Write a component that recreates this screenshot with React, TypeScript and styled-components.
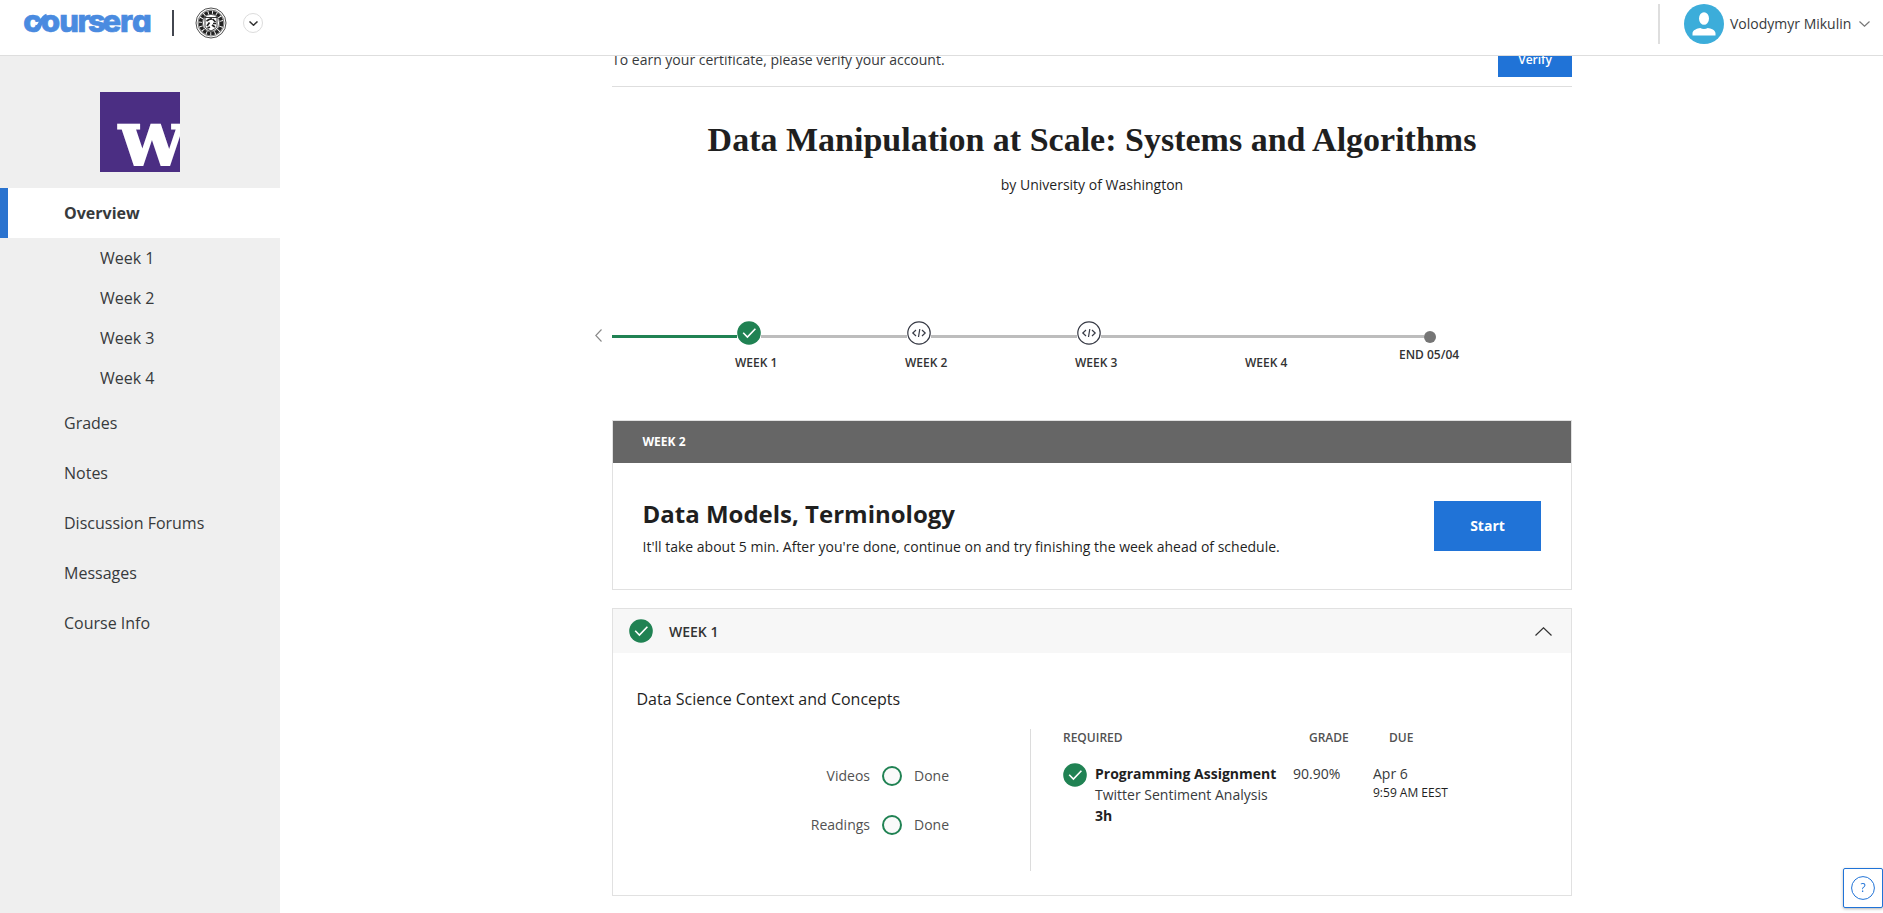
import React from "react";
import styled, { createGlobalStyle } from "styled-components";

const GlobalStyle = createGlobalStyle`
  * { box-sizing: border-box; }
  html, body { margin: 0; padding: 0; }
  body {
    background: #fff;
    color: #1f1f1f;
    font-family: "Open Sans", "Noto Sans", sans-serif;
    font-size: 14px;
    line-height: 21px;
    overflow: hidden;
  }
  svg { display: block; flex: none; }
  h1, h2, h3, p { margin: 0; }
`;

const green = "#208253";
const blue = "#2073d7";

const Page = styled.div`
  display: flex;
  flex-direction: column;
  height: 913px;
  overflow: hidden;
`;
const Header = styled.header`
  display: flex;
  justify-content: space-between;
  flex: none;
  height: 56px;
  border-bottom: 1px solid #dedede;
  background: #fff;
`;
const Brand = styled.div`
  display: flex;
  align-items: center;
  height: 46px;
  padding-left: 22px;
`;
const Wordmark = styled.svg`
  overflow: visible;
`;
const BrandDivider = styled.span`
  width: 2px;
  height: 26px;
  margin: 0 21px 0 20px;
  background: #42464f;
`;
const RoundButton = styled.span`
  display: flex;
  align-items: center;
  justify-content: center;
  width: 20px;
  height: 20px;
  margin-left: 16px;
  border: 1px solid #dcdcdc;
  border-radius: 50%;
`;
const Account = styled.div`
  display: flex;
  align-items: center;
  height: 40px;
  margin: 4px 13px 0 0;
  padding-left: 24px;
  border-left: 2px solid #dedede;
  color: #373a3c;
`;
const AccountName = styled.span`
  width: 122px;
  margin: 0 7px 0 6px;
  padding-bottom: 1px;
  line-height: 20px;
  white-space: nowrap;
`;
const Body = styled.div`
  display: flex;
  flex: 1;
  min-height: 0;
`;
const Sidebar = styled.nav`
  flex: none;
  width: 280px;
  padding-top: 36px;
  background: #efefef;
`;
const SchoolLogo = styled.div`
  width: 80px;
  height: 80px;
  margin: 0 0 16px 100px;
`;
const NavItem = styled.div<{ $active?: boolean; $nested?: boolean }>`
  display: flex;
  align-items: center;
  height: ${(p) => (p.$nested ? 40 : 50)}px;
  padding-left: ${(p) => (p.$nested ? 92 : 56)}px;
  border-left: 8px solid ${(p) => (p.$active ? "#2a73cf" : "transparent")};
  background: ${(p) => (p.$active ? "#fff" : "transparent")};
  color: #373a3c;
  font-size: 16px;
  font-weight: ${(p) => (p.$active ? 700 : 400)};
`;
const Main = styled.main`
  flex: 1;
  overflow: hidden;
  padding-left: 332px;
`;
const Content = styled.div`
  width: 960px;
`;
const VerifyBar = styled.div`
  display: flex;
  justify-content: space-between;
  height: 46px;
  margin-top: -15px;
  border-bottom: 1px solid #dedede;
  color: #373a3c;
`;
const VerifyText = styled.p`
  padding-top: 8px;
`;
const Button = styled.button<{ $large?: boolean }>`
  display: flex;
  align-items: center;
  justify-content: center;
  width: ${(p) => (p.$large ? 107 : 74)}px;
  height: ${(p) => (p.$large ? 50 : 36)}px;
  padding: 0 0 ${(p) => (p.$large ? 2 : 0)}px;
  border: 0;
  background: ${blue};
  color: #fff;
  font: ${(p) => (p.$large ? "700 14px" : "600 12px")} "Open Sans", sans-serif;
`;
const Title = styled.h1`
  margin-top: 33px;
  text-align: center;
  font: 700 34px/40px "Liberation Serif", serif;
`;
const Byline = styled.p`
  margin-top: 14px;
  text-align: center;
`;
const Timeline = styled.section`
  display: flex;
  height: 99px;
  margin: 126px 0 0 -17px;
`;
const PrevArrow = styled.div`
  width: 17px;
  padding-top: 8px;
`;
const Step = styled.div<{ $track?: number }>`
  display: grid;
  grid-template-columns: ${(p) => p.$track ?? 146}px 24px;
  grid-template-rows: 24px auto;
  width: ${(p) => (p.$track ?? 146) + 24}px;
`;
const Track = styled.span<{ $done?: boolean }>`
  height: 3px;
  margin-top: 14px;
  background: ${(p) => (p.$done ? green : "#bdbdbd")};
`;
const StepLabel = styled.span<{ $end?: boolean }>`
  grid-column: 2;
  margin: ${(p) => (p.$end ? "-1px 0 0 -25px" : "7px 0 0 -2px")};
  color: #333;
  font-size: 12px;
  font-weight: 600;
  white-space: nowrap;
`;
const Card = styled.section<{ $height: number }>`
  height: ${(p) => p.$height}px;
  margin-bottom: 18px;
  border: 1px solid #e1e1e1;
  background: #fff;
`;
const DarkHead = styled.div`
  height: 42px;
  padding: 10px 0 0 29.5px;
  background: #666;
  color: #fff;
  font-size: 12px;
  font-weight: 700;
`;
const NextUp = styled.div`
  display: flex;
  justify-content: space-between;
  padding: 38px 30px 0 29.5px;
`;
const LessonTitle = styled.h2`
  font-size: 24px;
  line-height: 30px;
  font-weight: 700;
  margin: -2px 0 7px;
`;
const LightHead = styled.div`
  display: flex;
  align-items: center;
  height: 44px;
  padding: 0 19px 0 16px;
  background: #f7f7f7;
`;
const WeekName = styled.h3`
  flex: 1;
  margin-left: 16px;
  color: #333;
  font-size: 14px;
  font-weight: 600;
`;
const ModuleName = styled.p`
  padding: 35px 0 0 23.5px;
  font-size: 16px;
  line-height: 22px;
`;
const Columns = styled.div`
  display: flex;
  height: 142px;
  margin-top: 19px;
`;
const Progress = styled.div`
  width: 418px;
  padding-top: 35px;
  border-right: 1px solid #dcdcdc;
`;
const ProgressRow = styled.div`
  display: grid;
  grid-template-columns: 257px 20px auto;
  column-gap: 12px;
  align-items: center;
  height: 24px;
  margin-bottom: 25px;
  color: #525252;
`;
const ProgressLabel = styled.span<{ $right?: boolean }>`
  padding-bottom: 2px;
  text-align: ${(p) => (p.$right ? "right" : "left")};
`;
const Ring = styled.i`
  width: 20px;
  height: 20px;
  border: 2px solid ${green};
  border-radius: 50%;
  background: #fafafa;
`;
const Required = styled.div`
  display: grid;
  grid-template-columns: 32px 198px 80px auto;
  grid-template-rows: 34px auto;
  padding-left: 32px;
`;
const ColHead = styled.span<{ $wide?: boolean }>`
  grid-column: ${(p) => (p.$wide ? "span 2" : "auto")};
  padding: ${(p) => (p.$wide ? "0" : "0 0 0 16px")};
  line-height: 17px;
  color: #525252;
  font-size: 12px;
  font-weight: 600;
`;
const Cell = styled.div`
  color: #1f1f1f;
`;
const Muted = styled.div`
  color: #373a3c;
`;
const Strong = styled.div`
  font-weight: 700;
`;
const Time = styled.div`
  font-size: 12px;
  line-height: 18px;
`;
const HelpButton = styled.button`
  position: fixed;
  right: 0;
  bottom: 5px;
  display: flex;
  align-items: center;
  justify-content: center;
  width: 40px;
  height: 40px;
  padding: 0;
  border: 1px solid ${blue};
  border-radius: 2px;
  background: #fff;
  box-shadow: 0 1px 3px rgba(0, 0, 0, 0.3);
`;

const CourseraLogo = () => (
  <Wordmark width="130" height="46" viewBox="22 0 130 46">
    <text
      y="31.5"
      x="23.2 41 59.2 77.6 88 102.4 120 132"
      fill="#4a8be0"
      stroke="#4a8be0"
      strokeWidth="0.7"
      style={{ fontFamily: "Inter", fontWeight: 800, fontSize: 31, fontFeatureSettings: '"cv11"' }}
    >
      coursera
    </text>
    <path d="M35 30 C40 28 41 18 47 16" fill="none" stroke="#4a8be0" strokeWidth="4.5" />
  </Wordmark>
);

const Seal = () => (
  <svg width="32" height="32" viewBox="0 0 32 32" fill="none" stroke="#222">
    <circle cx="16" cy="16" r="15" strokeWidth="0.8" />
    <circle cx="16" cy="16" r="13" strokeWidth="0.6" />
    <circle cx="16" cy="16" r="10.6" strokeWidth="3.4" strokeDasharray="3.4 .9" />
    <circle cx="16" cy="16" r="8.6" strokeWidth="0.7" />
    <path d="M10 10.500h12v8c0 3-3.500 4-6 5.500-2.500-1.500-6-2.500-6-5.500z" fill="#fff" strokeWidth="0.9" />
    <path d="M11.500 14l3.500-2M17.500 12l3 3M12 19l2.500-3.500M17 18l3 2M18 16.500h3M12.500 21l2.500-1M16 11v2" strokeWidth="1.700" />
  </svg>
);

const Chevron = ({ w, h, color, width = 1.2, dir = "down" }: { w: number; h: number; color: string; width?: number; dir?: string }) => {
  const d =
    dir === "down" ? `M.5 .5L${w / 2} ${h - 0.8}L${w - 0.5} .5`
    : dir === "up" ? `M.5 ${h - 0.5}L${w / 2} .8L${w - 0.5} ${h - 0.5}`
    : `M${w - 0.5} .5L.8 ${h / 2}L${w - 0.5} ${h - 0.5}`;
  return (
    <svg width={w} height={h} viewBox={`0 0 ${w} ${h}`}>
      <path d={d} fill="none" stroke={color} strokeWidth={width} />
    </svg>
  );
};

const Avatar = () => (
  <svg width="40" height="40" viewBox="0 0 40 40">
    <circle cx="20" cy="20" r="20" fill="#3cadda" />
    <ellipse cx="20" cy="14.500" rx="5" ry="6.300" fill="#fff" />
    <path d="M8.500 31.500v-2.200c0-3 4.500-4.800 7.800-5.200 2 1.200 5.400 1.200 7.400 0 3.300.4 7.800 2.200 7.800 5.200v2.200z" fill="#fff" />
  </svg>
);

const UniversityMark = () => (
  <svg width="80" height="80" viewBox="0 0 80 80">
    <rect width="80" height="80" fill="#4b2e83" />
    <text
      x="19"
      y="73"
      fill="#fff"
      stroke="#fff"
      strokeWidth="2.4"
      textLength="66"
      lengthAdjust="spacingAndGlyphs"
      style={{ fontFamily: "DejaVu Serif", fontWeight: 700, fontSize: 54 }}
    >
      W
    </text>
  </svg>
);

const CheckBadge = () => (
  <svg width="24" height="24" viewBox="0 0 24 24">
    <circle cx="12" cy="12" r="11.800" fill={green} />
    <path d="M6.200 11.800l4.200 4.200 8-8.300" fill="none" stroke="#fff" strokeWidth="1.600" />
  </svg>
);

const CodeBadge = () => (
  <svg width="24" height="24" viewBox="0 0 24 24" fill="none" stroke="#373a45" strokeWidth="1.200">
    <circle cx="12" cy="12" r="11.200" fill="#fff" />
    <path d="M9 9l-3.200 3L9 15M15 9l3.200 3L15 15M12.800 8l-1.300 8" />
  </svg>
);

const EndDot = () => (
  <svg width="12" height="24" viewBox="0 0 12 24">
    <circle cx="6" cy="16" r="6" fill="#757575" />
  </svg>
);

const HelpIcon = () => (
  <svg width="24" height="24" viewBox="0 0 24 24">
    <circle cx="12" cy="12" r="11.400" fill="none" stroke={blue} />
    <text x="12" y="16.200" textAnchor="middle" fill={blue} style={{ fontFamily: "Open Sans", fontSize: 12 }}>
      ?
    </text>
  </svg>
);

const weeks = ["Week 1", "Week 2", "Week 3", "Week 4"];
const links = ["Grades", "Notes", "Discussion Forums", "Messages", "Course Info"];

export default function App() {
  return (
    <Page>
      <GlobalStyle />
      <Header>
        <Brand>
          <CourseraLogo />
          <BrandDivider />
          <Seal />
          <RoundButton>
            <Chevron w={9} h={5} color="#333" width={1.5} />
          </RoundButton>
        </Brand>
        <Account>
          <Avatar />
          <AccountName>Volodymyr Mikulin</AccountName>
          <Chevron w={11} h={6} color="#777" width={1.2} />
        </Account>
      </Header>
      <Body>
        <Sidebar>
          <SchoolLogo>
            <UniversityMark />
          </SchoolLogo>
          <NavItem $active>Overview</NavItem>
          {weeks.map((w) => (
            <NavItem key={w} $nested>{w}</NavItem>
          ))}
          {links.map((l) => (
            <NavItem key={l}>{l}</NavItem>
          ))}
        </Sidebar>
        <Main>
          <Content>
            <VerifyBar>
              <VerifyText>To earn your certificate, please verify your account.</VerifyText>
              <Button>Verify</Button>
            </VerifyBar>
            <Title>Data Manipulation at Scale: Systems and Algorithms</Title>
            <Byline>by University of Washington</Byline>
            <Timeline>
              <PrevArrow>
                <Chevron w={7} h={13} color="#888" width={1.1} dir="left" />
              </PrevArrow>
              <Step $track={125}>
                <Track $done />
                <CheckBadge />
                <StepLabel>WEEK 1</StepLabel>
              </Step>
              <Step>
                <Track />
                <CodeBadge />
                <StepLabel>WEEK 2</StepLabel>
              </Step>
              <Step>
                <Track />
                <CodeBadge />
                <StepLabel>WEEK 3</StepLabel>
              </Step>
              <Step>
                <Track />
                <Track />
                <StepLabel>WEEK 4</StepLabel>
              </Step>
              <Step $track={153}>
                <Track />
                <EndDot />
                <StepLabel $end>END 05/04</StepLabel>
              </Step>
            </Timeline>
            <Card $height={170}>
              <DarkHead>WEEK 2</DarkHead>
              <NextUp>
                <div>
                  <LessonTitle>Data Models, Terminology</LessonTitle>
                  <p>It'll take about 5 min. After you're done, continue on and try finishing the week ahead of schedule.</p>
                </div>
                <Button $large>Start</Button>
              </NextUp>
            </Card>
            <Card $height={288}>
              <LightHead>
                <CheckBadge />
                <WeekName>WEEK 1</WeekName>
                <Chevron w={17} h={9} color="#333" width={1.2} dir="up" />
              </LightHead>
              <ModuleName>Data Science Context and Concepts</ModuleName>
              <Columns>
                <Progress>
                  {["Videos", "Readings"].map((label) => (
                    <ProgressRow key={label}>
                      <ProgressLabel $right>{label}</ProgressLabel>
                      <Ring />
                      <ProgressLabel>Done</ProgressLabel>
                    </ProgressRow>
                  ))}
                </Progress>
                <Required>
                  <ColHead $wide>REQUIRED</ColHead>
                  <ColHead>GRADE</ColHead>
                  <ColHead>DUE</ColHead>
                  <CheckBadge />
                  <Cell>
                    <Strong>Programming Assignment</Strong>
                    <Muted>Twitter Sentiment Analysis</Muted>
                    <Strong>3h</Strong>
                  </Cell>
                  <Cell>
                    <Muted>90.90%</Muted>
                  </Cell>
                  <Cell>
                    <Muted>Apr 6</Muted>
                    <Time>9:59 AM EEST</Time>
                  </Cell>
                </Required>
              </Columns>
            </Card>
          </Content>
        </Main>
      </Body>
      <HelpButton aria-label="Help">
        <HelpIcon />
      </HelpButton>
    </Page>
  );
}
